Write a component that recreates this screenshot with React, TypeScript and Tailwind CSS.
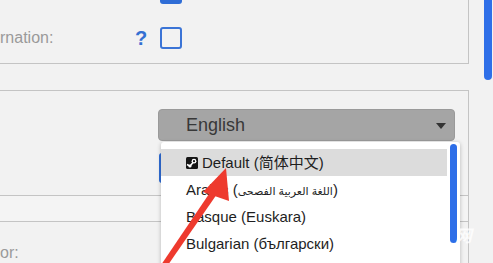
import React from "react";

const font = { fontFamily: '"Liberation Sans", Arial, "Noto Sans CJK SC", "DejaVu Sans", sans-serif' };

function SteamIcon() {
  return (
    <svg width="12" height="12" viewBox="0 0 12 12" className="shrink-0">
      <rect x="0" y="0" width="12" height="12" rx="1.5" fill="#151515" />
      <circle cx="8" cy="4.2" r="2.4" fill="#fff" />
      <circle cx="8" cy="4.2" r="1.1" fill="#151515" />
      <path d="M1 7.5 L4 9 L7 5.5" stroke="#fff" strokeWidth="1.6" fill="none" />
      <circle cx="4" cy="9" r="1.6" fill="#fff" />
    </svg>
  );
}

export default function App() {
  return (
    <div className="relative w-[493px] h-[263px] overflow-hidden bg-[#f2f2f2]" style={font}>
      <div className="flex">
        {/* main column */}
        <div className="w-[469px] flex flex-col">
          {/* panel 1 */}
          <div className="h-[64px] border-r border-b border-[#c4c4c4] overflow-hidden">
            <div className="ml-[160px] -mt-[18px] w-[22px] h-[22px] rounded-[3px] bg-[#2f6dd6]" />
            <div className="mt-[23px] flex items-center h-[22px]">
              <span className="w-[135px] text-[16px] text-[#9a9a9a] leading-none -mt-[1px]">rnation:</span>
              <span className="w-[12px] text-[20px] font-bold text-[#3570d2] leading-none">?</span>
              <div className="ml-[13px] w-[22px] h-[22px] rounded-[3px] border-2 border-[#3b74d6]" />
            </div>
          </div>
          {/* panel 2 */}
          <div className="mt-[26px] h-[106px] border-t border-r border-b border-[#c4c4c4]">
            <div className="pt-[18px] ml-[158px]">
              <div className="relative w-[297px] h-[32px] rounded-[4px] bg-[#a5a5a5] border border-[#9a9a9a] flex items-center">
                <span className="ml-[27px] text-[18px] text-[#383838] leading-none">English</span>
                <svg className="absolute right-[8px] top-[13px]" width="10" height="6" viewBox="0 0 10 6">
                  <path d="M0 0 L10 0 L5 6 Z" fill="#333" />
                </svg>
              </div>
              <div className="mt-[12px] ml-[1px] w-[290px] h-[30px] rounded-[3px] bg-[#2f6dd6]" />
            </div>
          </div>
          {/* strip */}
          <div className="h-[26px] border-r border-b border-[#c4c4c4] bg-[#f4f4f4]" />
          {/* panel 3 */}
          <div className="h-[60px] border-r border-[#c4c4c4]">
            <div className="mt-[23px] text-[16px] text-[#9a9a9a] leading-none">or:</div>
          </div>
        </div>
        {/* right gutter */}
        <div className="flex-1 flex justify-end pr-[1px]">
          <div className="w-[8px] h-[80px] rounded-b-full bg-[#2f6fe8]" />
        </div>
      </div>

      {/* dropdown overlay */}
      <div className="absolute left-[161px] top-[142px] w-[299px] h-[130px] bg-white rounded-t-[3px] shadow-[0_1px_4px_rgba(0,0,0,0.25)]">
        <div className="pt-[7px] pr-[13px]">
          <div className="h-[27px] bg-[#dcdcdc] flex items-center pl-[25px] gap-[4px]">
            <SteamIcon />
            <span className="text-[15px] text-[#1e1e1e] leading-none">Default (简体中文)</span>
          </div>
          <div className="h-[27px] flex items-center pl-[25px]">
            <span className="text-[15px] text-[#1e1e1e] leading-none">
              Arabic (<span className="text-[11px]">اللغة العربية الفصحى</span>)
            </span>
          </div>
          <div className="h-[27px] flex items-center pl-[25px]">
            <span className="text-[15px] text-[#1e1e1e] leading-none">Basque (Euskara)</span>
          </div>
          <div className="h-[27px] flex items-center pl-[25px]">
            <span className="text-[15px] text-[#1e1e1e] leading-none">Bulgarian (български)</span>
          </div>
        </div>
        <div className="absolute right-[3px] top-[2px] w-[7px] h-[99px] rounded-full bg-[#2d6ee8]" />
        <span className="absolute left-[294px] top-[86px] text-[17px] font-bold italic text-white leading-none opacity-80">网</span>
      </div>

      {/* red annotation arrow */}
      <svg className="absolute left-0 top-0 pointer-events-none" width="493" height="263" viewBox="0 0 493 263">
        <polygon points="161,265 168,265 217,194 211,191" fill="#ee3a2e" />
        <polygon points="226,168 203,192 229,201" fill="#ee3a2e" />
      </svg>
    </div>
  );
}
